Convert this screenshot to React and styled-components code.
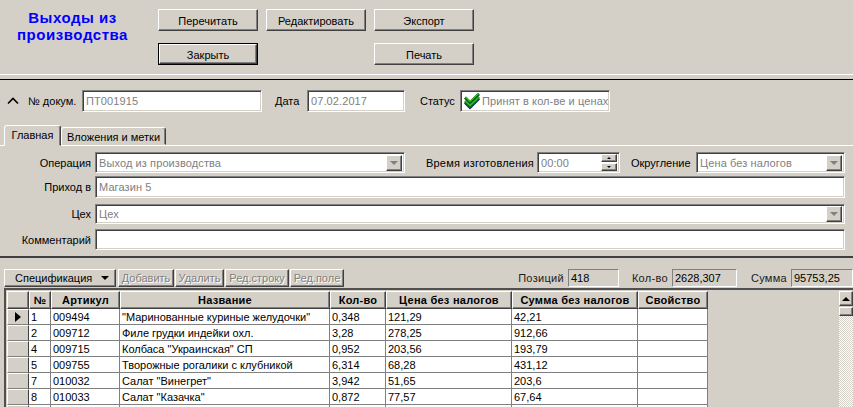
import React from "react";
import styled, { createGlobalStyle, css } from "styled-components";

const Global = createGlobalStyle`
  html, body { margin: 0; padding: 0; background: #d4d0c8; }
  * { box-sizing: border-box; }
`;

const raised = css`
  background: #d4d0c8;
  border: 1px solid;
  border-color: #fff #404040 #404040 #fff;
  box-shadow: inset -1px -1px 0 #808080;
`;
const sunken = css`
  border: 1px solid;
  border-color: #808080 #fff #fff #808080;
  box-shadow: inset 1px 1px 0 #404040, inset -1px -1px 0 #d4d0c8;
`;

const Page = styled.div`
  width: 853px;
  height: 407px;
  overflow: hidden;
  background: #d4d0c8;
  font-family: "Liberation Sans", Arial, sans-serif;
  font-size: 11px;
  color: #000;
  display: flex;
  flex-direction: column;
`;

const TopBar = styled.header`
  height: 74px;
  display: flex;
  flex: none;
`;
const Title = styled.h1`
  width: 145px;
  margin: 0 13px 0 0;
  padding: 9px 0 0;
  font-size: 15px;
  line-height: 17px;
  font-weight: bold;
  letter-spacing: 0.55px;
  color: #0000ff;
  text-align: center;
`;
const ActionGrid = styled.div`
  padding-top: 9px;
  display: grid;
  grid-template-columns: repeat(3, 100px);
  grid-auto-rows: 22px;
  column-gap: 8px;
  row-gap: 12px;
`;
const ActionButton = styled.button`
  ${raised}
  font: inherit;
  color: #000;
  padding: 1px 0 0;
  grid-column: ${(p) => p.$col || "auto"};
  ${(p) =>
    p.$default &&
    css`
      outline: 1px solid #000;
      outline-offset: -1px;
      border-width: 2px;
      border-color: #fff #404040 #404040 #fff;
      box-shadow: inset -1px -1px 0 #808080;
    `}
`;
const Divider = styled.div`
  flex: none;
  height: 6px;
  border-top: 1px solid #fff;
  border-bottom: 1px solid #000;
`;

const DocRow = styled.div`
  flex: none;
  margin-top: 10px;
  height: 22px;
  display: flex;
  align-items: center;
  padding-left: 7px;
`;
const Chevron = styled.svg`
  width: 12px;
  height: 8px;
  margin-right: 9px;
  flex: none;
`;
const Label = styled.label`
  flex: none;
  white-space: nowrap;
  letter-spacing: ${(p) => p.$spacing || "0"};
  margin-left: ${(p) => p.$ml || 0}px;
  margin-right: ${(p) => p.$mr || 0}px;
  width: ${(p) => (p.$w ? p.$w + "px" : "auto")};
  text-align: ${(p) => (p.$right ? "right" : "left")};
`;
const Field = styled.div`
  ${sunken}
  flex: ${(p) => (p.$w ? "none" : "1")};
  width: ${(p) => (p.$w ? p.$w + "px" : "auto")};
  height: ${(p) => p.$h || 22}px;
  background: #fff;
  color: #808080;
  display: flex;
  align-items: center;
  padding-left: 3px;
  letter-spacing: 0.1px;
  white-space: nowrap;
  overflow: hidden;
`;
const ComboArrow = styled.span`
  ${raised}
  margin-left: auto;
  margin-right: 2px;
  flex: none;
  width: 16px;
  height: 16px;
  display: flex;
  align-items: center;
  justify-content: center;
  &::after {
    content: "";
    border-style: solid;
    border-width: 4px 4px 0;
    border-color: #808080 transparent transparent;
  }
`;
const SpinBox = styled.span`
  margin-left: auto;
  margin-right: 2px;
  flex: none;
  width: 16px;
  display: flex;
  flex-direction: column;
  gap: 1px;
`;
const SpinPart = styled.span`
  ${raised}
  height: 8px;
  display: flex;
  align-items: center;
  justify-content: center;
  &::after {
    content: "";
    border-style: solid;
    border-color: transparent;
    border-width: ${(p) => (p.$down ? "2px 2px 0" : "0 2px 2px")};
    border-top-color: ${(p) => (p.$down ? "#000" : "transparent")};
    border-bottom-color: ${(p) => (p.$down ? "transparent" : "#000")};
  }
`;
const CheckIcon = styled.svg`
  width: 16px;
  height: 17px;
  flex: none;
  margin-right: 2px;
`;

const TabStrip = styled.div`
  flex: none;
  margin-top: 13px;
  height: 20px;
  padding-left: 4px;
  display: flex;
  align-items: flex-end;
`;
const Tab = styled.div`
  background: #d4d0c8;
  border: 1px solid;
  border-color: #fff #404040 transparent #fff;
  border-radius: 3px 3px 0 0;
  box-shadow: inset -1px 0 0 #808080;
  text-align: center;
  width: ${(p) => p.$w}px;
  height: ${(p) => (p.$active ? 21 : 18)}px;
  line-height: 18px;
  ${(p) => p.$active && "position: relative; z-index: 1; margin-bottom: -1px;"}
`;
const TabPage = styled.section`
  flex: none;
  height: 113px;
  border-top: 1px solid #fff;
  border-bottom: 2px solid #404040;
  padding: 6px 8px 0 0;
  display: flex;
  flex-direction: column;
`;
const FormRow = styled.div`
  display: flex;
  align-items: center;
  height: ${(p) => p.$h}px;
  margin-bottom: ${(p) => p.$mb}px;
`;

const Toolbar = styled.div`
  flex: none;
  margin-top: 11px;
  height: 18px;
  padding-left: 4px;
  display: flex;
  align-items: center;
`;
const MenuButton = styled.div`
  ${raised}
  width: 112px;
  height: 18px;
  display: flex;
  align-items: center;
  padding: 0 6px 0 10px;
  margin-right: 2px;
  &::after {
    content: "";
    margin-left: auto;
    border-style: solid;
    border-width: 4px 4px 0;
    border-color: #000 transparent transparent;
  }
`;
const ToolButton = styled.div`
  ${raised}
  width: ${(p) => p.$w}px;
  height: 18px;
  margin-right: 1px;
  text-align: center;
  line-height: 16px;
  color: #808080;
  text-shadow: 1px 1px 0 #fff;
`;
const Stats = styled.div`
  margin-left: auto;
  display: flex;
  align-items: center;
`;
const StatBox = styled.div`
  border: 1px solid;
  border-color: #808080 #fff #fff #808080;
  height: 18px;
  width: ${(p) => p.$w}px;
  margin-left: 4px;
  margin-right: ${(p) => p.$mr || 0}px;
  padding-left: 2px;
  line-height: 16px;
  white-space: nowrap;
`;
const StatLabel = styled.span`
  color: #202020;
  letter-spacing: 0.3px;
`;

const GridFrame = styled.div`
  flex: 1;
  margin: 1px 0 0 4px;
  border-top: 2px solid #505050;
  border-left: 2px solid #505050;
  padding: 1px 0 0 1px;
  display: flex;
  min-height: 0;
`;
const DataGrid = styled.div`
  width: 701px;
  flex: none;
  display: flex;
  flex-direction: column;
`;
const Row = styled.div`
  display: grid;
  grid-template-columns: 22px 22px 69px 210px 56px 126px 126px 70px;
  height: ${(p) => (p.$head ? 18 : 16)}px;
  flex: none;
`;
const HeadCell = styled.div`
  ${raised}
  font-weight: bold;
  text-align: center;
  line-height: 16px;
  letter-spacing: 0.25px;
  white-space: nowrap;
  overflow: hidden;
`;
const Indicator = styled.div`
  ${raised}
  border-color: #fff #404040 #808080 #fff;
  box-shadow: none;
  display: flex;
  align-items: center;
  justify-content: center;
  &::after {
    content: "";
    display: ${(p) => (p.$current ? "block" : "none")};
    border-style: solid;
    border-width: 5px 0 5px 6px;
    border-color: transparent transparent transparent #000;
  }
`;
const Cell = styled.div`
  background: #fff;
  border-right: 1px solid #808080;
  border-bottom: 1px solid #808080;
  padding-left: 2px;
  line-height: 16px;
  white-space: nowrap;
  overflow: hidden;
`;

const Scroll = styled.div`
  width: 14px;
  margin-left: auto;
  display: flex;
  flex-direction: column;
`;
const ScrollUp = styled.div`
  ${raised}
  height: 15px;
  display: flex;
  align-items: center;
  justify-content: center;
  &::after {
    content: "";
    border-style: solid;
    border-width: 0 4px 4px;
    border-color: transparent transparent #000;
  }
`;
const ScrollThumb = styled.div`
  ${raised}
  height: 9px;
  margin-top: 1px;
`;
const ScrollTrack = styled.div`
  flex: 1;
  background-color: #fff;
  background-image: conic-gradient(#d4d0c8 25%, #fff 0 50%, #d4d0c8 0 75%, #fff 0);
  background-size: 2px 2px;
`;

const columns = ["№", "Артикул", "Название", "Кол-во", "Цена без налогов", "Сумма без налогов", "Свойство"];
const rows = [
  ["1", "009494", "\"Маринованные куриные желудочки\"", "0,348", "121,29", "42,21", ""],
  ["2", "009712", "Филе грудки индейки охл.", "3,28", "278,25", "912,66", ""],
  ["4", "009715", "Колбаса \"Украинская\" СП", "0,952", "203,56", "193,79", ""],
  ["5", "009755", "Творожные рогалики с клубникой", "6,314", "68,28", "431,12", ""],
  ["7", "010032", "Салат \"Винегрет\"", "3,942", "51,65", "203,6", ""],
  ["8", "010033", "Салат \"Казачка\"", "0,872", "77,57", "67,64", ""],
  ["", "", "", "", "", "", ""],
];

export default function App() {
  return (
    <Page>
      <Global />
      <TopBar>
        <Title>
          Выходы из
          <br />
          производства
        </Title>
        <ActionGrid>
          <ActionButton>Перечитать</ActionButton>
          <ActionButton>Редактировать</ActionButton>
          <ActionButton>Экспорт</ActionButton>
          <ActionButton $default>Закрыть</ActionButton>
          <ActionButton $col="3">Печать</ActionButton>
        </ActionGrid>
      </TopBar>
      <Divider />
      <DocRow>
        <Chevron viewBox="0 0 12 8">
          <path d="M1 6.5 L6 1.5 L11 6.5" fill="none" stroke="#000" strokeWidth="1.6" />
        </Chevron>
        <Label $mr={5} $w={49}>№ докум.</Label>
        <Field $w={180}>ПТ001915</Field>
        <Label $ml={13} $mr={7} $w={25}>Дата</Label>
        <Field $w={98}>07.02.2017</Field>
        <Label $ml={15} $mr={7} $w={33}>Статус</Label>
        <Field $w={150}>
          <CheckIcon viewBox="0 0 16 17">
            <path d="M1 9.5 L6 14.5 L15 5.5" fill="none" stroke="#1c2a6e" strokeWidth="3" />
            <path d="M1 8 L6 13 L15 4" fill="none" stroke="#0a7a0a" strokeWidth="3" />
            <path d="M1 4.5 L6 9.5 L15 1" fill="none" stroke="#0a5c0a" strokeWidth="3" />
            <path d="M1.5 4 L6 8.5 L14.5 0.5" fill="none" stroke="#35c435" strokeWidth="1.2" />
            <path d="M1.5 8 L6 12.5 L14.5 4.5" fill="none" stroke="#35c435" strokeWidth="1.2" />
          </CheckIcon>
          Принят в кол-ве и ценах
        </Field>
      </DocRow>
      <TabStrip>
        <Tab $active $w={57}>Главная</Tab>
        <Tab $w={105}>Вложения и метки</Tab>
      </TabStrip>
      <TabPage>
        <FormRow $h={21} $mb={3}>
          <Label $w={91} $right $mr={4}>Операция</Label>
          <Field $w={310} $h={21}>
            Выход из производства
            <ComboArrow />
          </Field>
          <Label $ml={21} $mr={5} $w={106} $spacing="0.2px">Время изготовления</Label>
          <Field $w={83} $h={21}>
            00:00
            <SpinBox>
              <SpinPart />
              <SpinPart $down />
            </SpinBox>
          </Field>
          <Label $ml={11} $mr={5} $w={60}>Округление</Label>
          <Field $h={21}>
            Цена без налогов
            <ComboArrow />
          </Field>
        </FormRow>
        <FormRow $h={22} $mb={6}>
          <Label $w={91} $right $mr={4}>Приход в</Label>
          <Field>Магазин 5</Field>
        </FormRow>
        <FormRow $h={20} $mb={5}>
          <Label $w={91} $right $mr={4}>Цех</Label>
          <Field $h={20}>
            Цех
            <ComboArrow />
          </Field>
        </FormRow>
        <FormRow $h={21} $mb={0}>
          <Label $w={91} $right $mr={4}>Комментарий</Label>
          <Field $h={21} />
        </FormRow>
      </TabPage>
      <Toolbar>
        <MenuButton>Спецификация</MenuButton>
        <ToolButton $w={56}>Добавить</ToolButton>
        <ToolButton $w={49}>Удалить</ToolButton>
        <ToolButton $w={64}>Ред.строку</ToolButton>
        <ToolButton $w={54}>Ред.поле</ToolButton>
        <Stats>
          <StatLabel>Позиций</StatLabel>
          <StatBox $w={51} $mr={13}>418</StatBox>
          <StatLabel>Кол-во</StatLabel>
          <StatBox $w={65} $mr={14}>2628,307</StatBox>
          <StatLabel>Сумма</StatLabel>
          <StatBox $w={62}>95753,25</StatBox>
        </Stats>
      </Toolbar>
      <GridFrame>
        <DataGrid>
          <Row $head>
            <HeadCell />
            {columns.map((c) => (
              <HeadCell key={c}>{c}</HeadCell>
            ))}
          </Row>
          {rows.map((r, i) => (
            <Row key={i}>
              <Indicator $current={i === 0} />
              {r.map((v, j) => (
                <Cell key={j}>{v}</Cell>
              ))}
            </Row>
          ))}
        </DataGrid>
        <Scroll>
          <ScrollUp />
          <ScrollThumb />
          <ScrollTrack />
        </Scroll>
      </GridFrame>
    </Page>
  );
}
